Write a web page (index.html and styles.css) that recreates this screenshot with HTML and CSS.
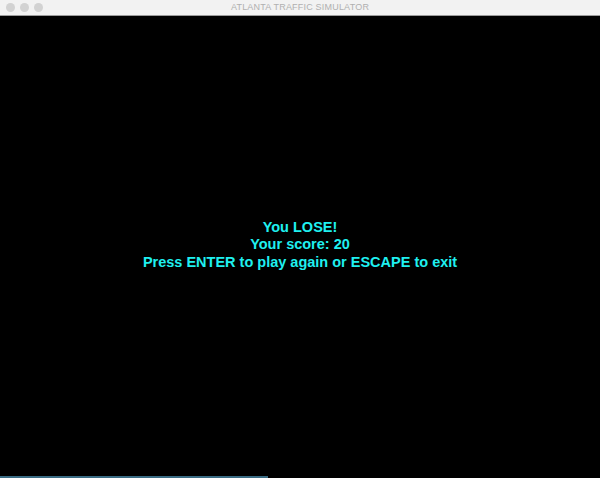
FILE: index.html
```html
<!DOCTYPE html>
<html>
<head>
<meta charset="utf-8">
<link rel="stylesheet" href="styles.css">
</head>
<body>
<div class="window">
  <div class="titlebar">
    <div class="lights">
      <span class="light"></span>
      <span class="light"></span>
      <span class="light"></span>
    </div>
    <div class="title">ATLANTA TRAFFIC SIMULATOR</div>
  </div>
  <div class="screen">
    <div class="message">
      <div class="line">You LOSE!</div>
      <div class="line">Your score: 20</div>
      <div class="line">Press ENTER to play again or ESCAPE to exit</div>
    </div>
  </div>
  <div class="bottom">
    <div class="progress"></div>
  </div>
</div>
</body>
</html>
```
FILE: styles.css
```css
html, body {
  margin: 0;
  padding: 0;
  background: #000;
}
.window {
  width: 600px;
  height: 478px;
  display: flex;
  flex-direction: column;
  background: #000;
}
.titlebar {
  height: 15px;
  background: #f2f2f2;
  border-bottom: 1px solid #9c9c9c;
  display: flex;
  align-items: center;
  justify-content: center;
  position: relative;
  flex-shrink: 0;
}
.lights {
  position: absolute;
  left: 6px;
  top: 3px;
  display: flex;
  gap: 5px;
}
.light {
  width: 9px;
  height: 9px;
  border-radius: 50%;
  background: #d2d2d2;
}
.title {
  font-family: "Liberation Sans", Arial, sans-serif;
  font-size: 9px;
  color: #b0b0b0;
  letter-spacing: 0.2px;
  line-height: 15px;
}
.screen {
  flex: 1;
  display: flex;
  align-items: center;
  justify-content: center;
}
.message {
  text-align: center;
  font-family: "Liberation Sans", Arial, sans-serif;
  font-weight: bold;
  font-size: 14.5px;
  line-height: 17.5px;
  color: #1ff0f0;
  margin-top: -2px;
}
.bottom {
  height: 2px;
  flex-shrink: 0;
  display: flex;
}
.progress {
  width: 268px;
  height: 2px;
  background: #3a6c84;
}
```
